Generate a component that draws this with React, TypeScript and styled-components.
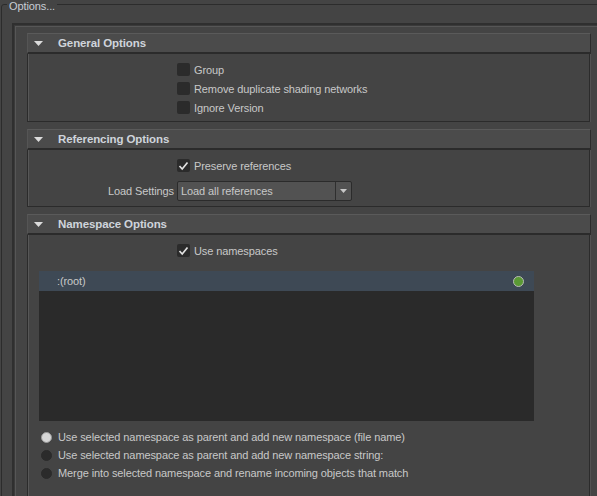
import styled, { createGlobalStyle } from "styled-components";

const GlobalStyle = createGlobalStyle`
  html, body {
    margin: 0;
    padding: 0;
    background: #444444;
    overflow: hidden;
  }
  body {
    font-family: "Liberation Sans", Arial, sans-serif;
    font-size: 11px;
    letter-spacing: -0.1px;
    color: #c8c8c8;
  }
`;

const Page = styled.div`
  width: 640px;
  height: 496px;
  padding-left: 1px;
  box-sizing: border-box;
`;

const Group = styled.fieldset`
  margin: 0;
  padding: 0;
  min-width: 0;
  border: 1px solid #2c2c2c;
  border-radius: 3px 0 0 0;
`;

const Legend = styled.legend`
  margin-left: 5px;
  padding: 0 2px;
  height: 8px;
  line-height: 12px;
  color: #c8cdd4;
`;

const GroupInner = styled.div`
  padding: 15px 0 0 10px;
`;

const ScrollFrame = styled.div`
  border: 2px solid #2f2f2f;
  box-shadow: inset 1px 1px 0 #3a3a3a, inset 2px 2px 0 #565656;
  padding: 8px 0 0 13px;
  height: 520px;
`;

const Section = styled.section`
  width: 564px;
  & + & {
    margin-top: 7px;
  }
`;

const Header = styled.div`
  display: flex;
  align-items: center;
  height: 18px;
  padding-left: 6px;
  background: #4b4b4b;
  border-top: 1px solid #5a5a5a;
  border-left: 1px solid #555555;
  border-right: 1px solid #2b2b2b;
  border-bottom: 2px solid #2b2b2b;
  font-weight: bold;
  font-size: 11.5px;
  color: #cfd4db;
`;

const Arrow = styled.svg`
  width: 9px;
  height: 5px;
  margin-right: 15px;
  flex: none;
`;

const Body = styled.div<{ $padBottom?: number }>`
  margin-right: 1px;
  padding: 6px 0 ${(p) => p.$padBottom ?? 4}px;
  border-left: 1px solid #2b2b2b;
  border-right: 1px solid #2b2b2b;
  border-bottom: 1px solid #2b2b2b;
  box-shadow: inset 1px 0 0 #575757, 1px 0 0 #525252;
`;

const Row = styled.div<{ $gap?: number; $height?: number }>`
  display: grid;
  grid-template-columns: 146px 1fr;
  column-gap: 3px;
  align-items: center;
  height: ${(p) => p.$height ?? 19}px;
  margin-top: ${(p) => p.$gap ?? 0}px;
`;

const FieldLabel = styled.span`
  text-align: right;
  white-space: nowrap;
`;

const Check = styled.label`
  display: flex;
  align-items: center;
  gap: 4px;
  white-space: nowrap;
`;

const Box = styled.span`
  width: 13px;
  height: 13px;
  border-radius: 2px;
  background: #2b2b2b;
  display: flex;
  align-items: center;
  justify-content: center;
  flex: none;
`;

const Select = styled.div`
  display: flex;
  width: 175px;
  height: 20px;
  box-sizing: border-box;
  border: 1px solid #2b2b2b;
  border-radius: 2px;
  background: #525252;
`;

const SelectText = styled.span`
  flex: 1;
  display: flex;
  align-items: center;
  padding-left: 3px;
  white-space: nowrap;
`;

const SelectButton = styled.span`
  width: 15px;
  border-left: 1px solid #2f2f2f;
  display: flex;
  align-items: center;
  justify-content: center;
`;

const List = styled.div`
  margin: 11px 0 0 11px;
  width: 495px;
  height: 150px;
  background: #2a2a2a;
`;

const ListItem = styled.div`
  display: flex;
  align-items: center;
  justify-content: space-between;
  height: 20px;
  padding: 0 10px 0 18px;
  background: #3e4955;
`;

const Dot = styled.span`
  width: 11px;
  height: 11px;
  box-sizing: border-box;
  border-radius: 50%;
  border: 1px solid #b9bcb6;
  background: #5a9934;
`;

const Radios = styled.div`
  margin-top: 7px;
  padding-left: 13px;
`;

const RadioRow = styled.label`
  display: flex;
  align-items: center;
  gap: 6px;
  height: 18px;
  white-space: nowrap;
`;

const RadioDot = styled.span<{ $on?: boolean }>`
  width: 11px;
  height: 11px;
  box-sizing: border-box;
  border-radius: 50%;
  flex: none;
  background: ${(p) => (p.$on ? "#d6d6d6" : "#2b2b2b")};
  border: 1px solid ${(p) => (p.$on ? "#9a9a9a" : "#2b2b2b")};
`;

function Tick() {
  return (
    <svg width="11" height="10" viewBox="0 0 11 10">
      <polyline
        points="1.5,5 4.2,8 9.5,1.5"
        fill="none"
        stroke="#e2e2e2"
        strokeWidth="1.7"
      />
    </svg>
  );
}

function CheckBox({ label, checked }: { label: string; checked?: boolean }) {
  return (
    <Check>
      <Box>{checked && <Tick />}</Box>
      {label}
    </Check>
  );
}

function SectionHeader({ title }: { title: string }) {
  return (
    <Header>
      <Arrow viewBox="0 0 9 5">
        <polygon points="0,0 9,0 4.5,5" fill="#dcdcdc" />
      </Arrow>
      {title}
    </Header>
  );
}

function App() {
  return (
    <Page>
      <GlobalStyle />
      <Group>
        <Legend>Options...</Legend>
        <GroupInner>
          <ScrollFrame>
            <Section>
              <SectionHeader title="General Options" />
              <Body>
                <Row>
                  <span />
                  <CheckBox label="Group" />
                </Row>
                <Row>
                  <span />
                  <CheckBox label="Remove duplicate shading networks" />
                </Row>
                <Row>
                  <span />
                  <CheckBox label="Ignore Version" />
                </Row>
              </Body>
            </Section>

            <Section>
              <SectionHeader title="Referencing Options" />
              <Body $padBottom={5}>
                <Row>
                  <span />
                  <CheckBox label="Preserve references" checked />
                </Row>
                <Row $gap={6} $height={20}>
                  <FieldLabel>Load Settings</FieldLabel>
                  <Select>
                    <SelectText>Load all references</SelectText>
                    <SelectButton>
                      <svg width="7" height="4" viewBox="0 0 7 4">
                        <polygon points="0,0 7,0 3.5,4" fill="#c8c8c8" />
                      </svg>
                    </SelectButton>
                  </Select>
                </Row>
              </Body>
            </Section>

            <Section>
              <SectionHeader title="Namespace Options" />
              <Body $padBottom={40}>
                <Row>
                  <span />
                  <CheckBox label="Use namespaces" checked />
                </Row>
                <List>
                  <ListItem>
                    <span>:(root)</span>
                    <Dot />
                  </ListItem>
                </List>
                <Radios>
                  <RadioRow>
                    <RadioDot $on />
                    Use selected namespace as parent and add new namespace (file name)
                  </RadioRow>
                  <RadioRow>
                    <RadioDot />
                    Use selected namespace as parent and add new namespace string:
                  </RadioRow>
                  <RadioRow>
                    <RadioDot />
                    Merge into selected namespace and rename incoming objects that match
                  </RadioRow>
                </Radios>
              </Body>
            </Section>
          </ScrollFrame>
        </GroupInner>
      </Group>
    </Page>
  );
}

export default App;
